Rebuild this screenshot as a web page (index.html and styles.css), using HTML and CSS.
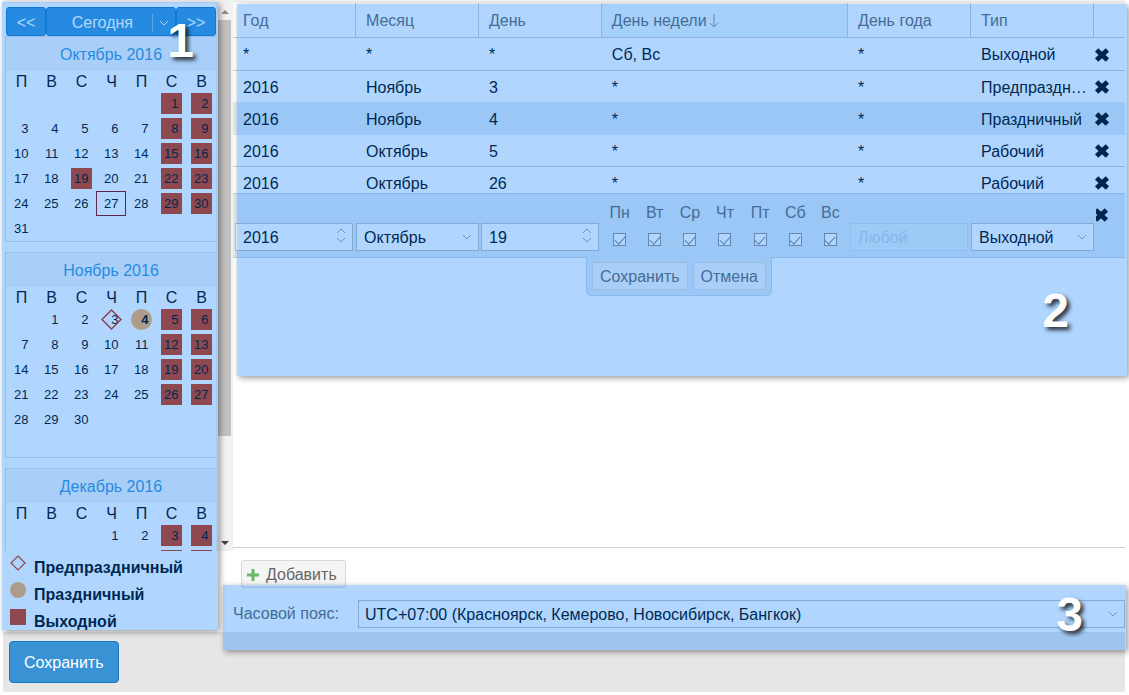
FILE: index.html
```
<!DOCTYPE html>
<html lang="ru">
<head>
    <meta charset="UTF-8">
    <meta name="viewport" content="width=device-width, initial-scale=1.0">
    <title>Производственный календарь</title>
    <link rel="stylesheet" href="styles.css">
</head>
<body>
    <!-- Shared icons -->
    <svg class="sprite" aria-hidden="true">
        <symbol id="icon-remove" viewBox="0 0 16 16"><path d="M2.6 3L13.4 13M13.4 3L2.6 13" stroke="#000" stroke-width="4.8" fill="none"/></symbol>
        <symbol id="icon-down" viewBox="0 0 10 16"><path d="M1 6L5 10L9 6" stroke="#a0a0a0" fill="none"/></symbol>
        <symbol id="icon-spin" viewBox="0 0 10 16"><path d="M1 6L5 2L9 6M1 11L5 15L9 11" stroke="#a0a0a0" fill="none"/></symbol>
        <symbol id="icon-sort" viewBox="0 0 10 16"><path d="M5 1V14M1 10L5 14L9 10" stroke="#909090" fill="none"/></symbol>
    </svg>

    <div class="app">
        <div class="main">
            <!-- Calendars -->
            <aside class="sidebar">
                <div class="calendar-scroll">
                    <div class="calendar-list">
                        <div class="calendar-nav">
                            <button class="nav-button">&lt;&lt;</button>
                            <button class="nav-button today">Сегодня
                                <span class="today-arrow"><svg width="10" height="16" viewBox="0 0 10 16"><path d="M1 6L5 10L9 6" stroke="#fff" fill="none"/></svg></span>
                            </button>
                            <button class="nav-button">&gt;&gt;</button>
                        </div>
                        <div id="calendars"></div>
                    </div>
                    <div class="scrollbar">
                        <span class="scroll-up"></span>
                        <span class="scroll-thumb"></span>
                        <span class="scroll-down"></span>
                    </div>
                </div>
                <ul class="legend">
                    <li><svg width="16" height="16"><path d="M8 1L15 8L8 15L1 8Z" fill="none" stroke="#cd3400" stroke-width="1.2"/></svg>Предпраздничный</li>
                    <li><svg width="16" height="16"><circle cx="8" cy="8" r="8" fill="#fcac56"/></svg>Праздничный</li>
                    <li><svg width="16" height="16"><path d="M0 0H16V16H0Z" fill="#cd3400"/></svg>Выходной</li>
                </ul>
                <div class="highlight highlight-calendar"><span>1</span></div>
            </aside>

            <!-- Rules -->
            <section class="content">
                <div class="rules">
                    <table class="rules-table">
                        <colgroup>
                            <col><col><col><col class="col-week"><col><col><col class="col-action">
                        </colgroup>
                        <thead>
                            <tr>
                                <th>Год</th>
                                <th>Месяц</th>
                                <th>День</th>
                                <th class="sorted">День недели<svg width="10" height="16"><use href="#icon-sort"/></svg></th>
                                <th>День года</th>
                                <th>Тип</th>
                                <th></th>
                            </tr>
                        </thead>
                        <tbody>
                            <tr>
                                <td>*</td><td>*</td><td>*</td><td>Сб, Вс</td><td>*</td><td>Выходной</td>
                                <td class="action"><button class="remove" aria-label="Удалить"><svg width="16" height="16"><use href="#icon-remove"/></svg></button></td>
                            </tr>
                            <tr>
                                <td>2016</td><td>Ноябрь</td><td>3</td><td>*</td><td>*</td><td>Предпраздничный</td>
                                <td class="action"><button class="remove" aria-label="Удалить"><svg width="16" height="16"><use href="#icon-remove"/></svg></button></td>
                            </tr>
                            <tr class="selected">
                                <td>2016</td><td>Ноябрь</td><td>4</td><td>*</td><td>*</td><td>Праздничный</td>
                                <td class="action"><button class="remove" aria-label="Удалить"><svg width="16" height="16"><use href="#icon-remove"/></svg></button></td>
                            </tr>
                            <tr>
                                <td>2016</td><td>Октябрь</td><td>5</td><td>*</td><td>*</td><td>Рабочий</td>
                                <td class="action"><button class="remove" aria-label="Удалить"><svg width="16" height="16"><use href="#icon-remove"/></svg></button></td>
                            </tr>
                            <tr>
                                <td>2016</td><td>Октябрь</td><td>26</td><td>*</td><td>*</td><td>Рабочий</td>
                                <td class="action"><button class="remove" aria-label="Удалить"><svg width="16" height="16"><use href="#icon-remove"/></svg></button></td>
                            </tr>
                        </tbody>
                    </table>

                    <!-- Row editor -->
                    <form class="editor" onsubmit="return false">
                        <div class="editor-fields">
                            <div class="field spin">
                                <input type="text" value="2016" aria-label="Год">
                                <svg width="10" height="16"><use href="#icon-spin"/></svg>
                            </div>
                            <div class="field">
                                <select aria-label="Месяц"><option>Октябрь</option><option>Ноябрь</option><option>Декабрь</option></select>
                                <svg width="10" height="16"><use href="#icon-down"/></svg>
                            </div>
                            <div class="field spin">
                                <input type="text" value="19" aria-label="День">
                                <svg width="10" height="16"><use href="#icon-spin"/></svg>
                            </div>
                            <div class="weekdays">
                                <label>Пн<input type="checkbox" checked></label>
                                <label>Вт<input type="checkbox" checked></label>
                                <label>Ср<input type="checkbox" checked></label>
                                <label>Чт<input type="checkbox" checked></label>
                                <label>Пт<input type="checkbox" checked></label>
                                <label>Сб<input type="checkbox" checked></label>
                                <label>Вс<input type="checkbox" checked></label>
                            </div>
                            <div class="field spin disabled">
                                <input type="text" placeholder="Любой" aria-label="День года" disabled>
                            </div>
                            <div class="field">
                                <select aria-label="Тип"><option>Выходной</option><option>Праздничный</option><option>Предпраздничный</option><option>Рабочий</option></select>
                                <svg width="10" height="16"><use href="#icon-down"/></svg>
                            </div>
                            <button type="button" class="remove" aria-label="Удалить"><svg width="16" height="16"><use href="#icon-remove"/></svg></button>
                        </div>
                        <div class="editor-buttons">
                            <button class="button">Сохранить</button>
                            <button type="button" class="button">Отмена</button>
                        </div>
                    </form>
                    <div class="highlight highlight-rules"><span>2</span></div>
                </div>

                <div class="toolbar">
                    <button class="button add"><svg width="12" height="14"><path d="M6 1V13M0 7H12" stroke="#6cb86c" stroke-width="3"/></svg>Добавить</button>
                </div>

                <div class="timezone">
                    <label for="timezone">Часовой пояс:</label>
                    <div class="field">
                        <select id="timezone"><option>UTC+07:00 (Красноярск, Кемерово, Новосибирск, Бангкок)</option></select>
                        <svg width="10" height="16"><use href="#icon-down"/></svg>
                    </div>
                    <div class="highlight highlight-timezone"><span>3</span></div>
                </div>
            </section>
        </div>

        <footer class="footer">
            <button class="save">Сохранить</button>
        </footer>
    </div>

    <script>
        // offset - empty cells before the 1st, marks - day: css class
        const months = [
            { title: 'Октябрь 2016', offset: 5, days: 31, marks: { 19: 'dayoff', 27: 'current' } },
            { title: 'Ноябрь 2016', offset: 1, days: 30, marks: { 3: 'preholiday', 4: 'holiday' } },
            { title: 'Декабрь 2016', offset: 3, days: 31, marks: {} }
        ];
        const weekdays = ['П', 'В', 'С', 'Ч', 'П', 'С', 'В'];

        function renderMonth(month) {
            let rows = '';
            for (let week = 0; week < 6; week++) {
                rows += '<tr>';
                for (let i = 0; i < 7; i++) {
                    const day = week * 7 + i - month.offset + 1;
                    if (day < 1 || day > month.days) {
                        rows += '<td></td>';
                        continue;
                    }
                    const mark = month.marks[day] || (i > 4 ? 'dayoff' : '');
                    const diamond = mark === 'preholiday'
                        ? '<svg width="21" height="21"><path d="M10.500 1L20 10.500L10.500 20L1 10.500Z" fill="none" stroke="#cd2000" stroke-width="1.4"/></svg>'
                        : '';
                    rows += `<td class="${mark}"><span>${diamond}${day}</span></td>`;
                }
                rows += '</tr>';
            }
            return `<table class="calendar">
                <caption>${month.title}</caption>
                <thead><tr>${weekdays.map(d => `<th>${d}</th>`).join('')}</tr></thead>
                <tbody>${rows}</tbody>
            </table>`;
        }

        document.getElementById('calendars').innerHTML = months.map(renderMonth).join('');
    </script>
</body>
</html>
```
FILE: styles.css
```
* {
    box-sizing: border-box;
}

body {
    margin: 0;
    font-family: "Liberation Sans", Arial, sans-serif;
    font-size: 16px;
    color: #000;
    background-color: #fff;
}

button, input, select {
    font: inherit;
    margin: 0;
}

button {
    cursor: pointer;
}

.sprite {
    display: none;
}

.app {
    display: flex;
    flex-direction: column;
    height: 100vh;
    padding: 0 4px 3px 3px;
}

.main {
    display: flex;
    flex: 1;
    min-height: 0;
    border-top: 3px solid #f1f1f1;
}

/* Calendars */
.sidebar {
    position: relative;
    display: flex;
    flex-direction: column;
    width: 230px;
    flex-shrink: 0;
}

.calendar-scroll {
    display: flex;
    flex: 1;
    min-height: 0;
}

.calendar-list {
    flex: 1;
    padding: 4px 0 0 2px;
    overflow: hidden;
}

.calendar-nav {
    display: flex;
    padding-left: 1px;
}

.nav-button {
    width: 40px;
    height: 29px;
    padding: 2px 0 0;
    border: 1px solid #1a78c2;
    border-radius: 3px;
    background-color: #3892d4;
    color: #fff;
}

.nav-button.today {
    display: flex;
    flex: 1;
    align-items: center;
    justify-content: flex-end;
    gap: 19px;
}

.today-arrow {
    display: flex;
    padding: 1px 6px;
    border-left: 1px solid #7fb8e4;
}

.calendar {
    width: 100%;
    margin-bottom: 10px;
    border-spacing: 0;
    table-layout: fixed;
    border: 1px solid #dcdcdc;
    border-width: 0 0 1px 1px;
}

.calendar caption {
    height: 35px;
    padding-top: 1px;
    line-height: 34px;
    border: 1px solid #dcdcdc;
    border-width: 1px 0 0 1px;
    background-color: #f5f5f5;
    color: #3892d4;
}

.calendar th {
    height: 20px;
    padding: 2px 0 0 1px;
    font-weight: normal;
    line-height: 18px;
}

.calendar td {
    height: 25px;
    padding: 0;
    font-size: 13px;
}

.calendar span {
    position: relative;
    display: block;
    width: 21px;
    height: 21px;
    margin: 0 auto;
    padding-right: 3px;
    line-height: 21px;
    text-align: right;
}

.dayoff span {
    background-color: #cd3400;
}

.calendar .current {
    border: 1px solid #8b0000;
}

.holiday span {
    border-radius: 50%;
    background-color: #fcac56;
    font-weight: bold;
}

.preholiday svg {
    position: absolute;
    top: 0;
    left: 0;
}

.scrollbar {
    display: flex;
    flex-direction: column;
    align-items: center;
    width: 17px;
    background-color: #f1f1f1;
}

.scroll-up, .scroll-down {
    margin: 7px 0 6px;
    border: 4px solid transparent;
    border-top-width: 0;
    border-bottom-color: #8a8a8a;
}

.scroll-down {
    margin: auto 0 6px;
    border-width: 4px 4px 0;
    border-color: #404040 transparent transparent;
}

.scroll-thumb {
    width: 13px;
    height: 76%;
    background-color: #c1c1c1;
}

.legend {
    margin: 0;
    padding: 0 7px;
    list-style: none;
    font-weight: bold;
}

.legend li {
    display: flex;
    gap: 8px;
    height: 27px;
    padding-top: 3px;
    line-height: 27px;
}

.legend svg {
    margin-top: 1px;
}

/* Highlighted zones */
.highlight {
    position: absolute;
    z-index: 5;
    background-color: rgba(0, 123, 255, 0.31);
    box-shadow: 2px 2px 6px rgba(0, 0, 0, 0.4);
    pointer-events: none;
}

.highlight span {
    position: absolute;
    color: #fff;
    font-size: 48px;
    font-weight: bold;
    line-height: 48px;
    text-shadow: 3px 3px 4px rgba(0, 0, 0, 0.8);
}

.highlight-calendar {
    top: -1px;
    bottom: 2px;
    left: -1px;
    width: 216px;
}

.highlight-calendar span {
    top: 15px;
    right: 24px;
}

.highlight-rules {
    top: 1px;
    right: -2px;
    left: 4px;
    height: 372px;
}

.highlight-rules span {
    right: 58px;
    bottom: 41px;
}

.highlight-timezone {
    top: -15px;
    right: -1px;
    bottom: -22px;
    left: -10px;
}

.highlight-timezone span {
    top: 6px;
    right: 43px;
}

/* Rules */
.content {
    display: flex;
    flex: 1;
    flex-direction: column;
    min-width: 0;
    padding-bottom: 4px;
}

.rules {
    position: relative;
    flex: 1;
    min-height: 0;
    border-bottom: 1px solid #cecece;
}

.rules-table {
    width: 100%;
    border-collapse: separate;
    border-spacing: 0;
    table-layout: fixed;
}

.col-week {
    width: 27.6%;
}

.col-action {
    width: 31px;
}

.rules-table th {
    height: 35px;
    padding: 2px 10px 0;
    border: 1px solid #cecece;
    border-width: 0 1px 1px 0;
    color: #666;
    font-weight: normal;
    text-align: left;
}

.rules-table th:last-child {
    border-right: 0;
}

.rules-table .sorted {
    background-color: #eff6fb;
}

.sorted svg {
    margin-left: 2px;
    vertical-align: -3px;
}

.rules-table td {
    height: 32px;
    padding: 2px 6px 0 10px;
    border-bottom: 1px solid #cecece;
    overflow: hidden;
    white-space: nowrap;
    text-overflow: ellipsis;
}

.rules-table tr:first-child td {
    height: 33px;
}

.rules-table tr:nth-child(2) td, .rules-table .selected td {
    border-color: #dfeaf2;
}

.rules-table .selected td {
    background-color: #dfeaf2;
}

.rules-table .action {
    padding: 1px 0 0;
}

.remove {
    display: flex;
    padding: 0;
    border: 0;
    background: none;
}

/* Row editor */
.editor {
    position: relative;
    margin-top: -6px;
}

.editor-fields {
    display: grid;
    grid-template-columns: 1fr 1fr 1fr 2fr 1fr 1fr 31px;
    align-items: end;
    height: 65px;
    padding-bottom: 6px;
    border: 1px solid #c5d5de;
    border-width: 1px 0;
    background-color: #dfeaf2;
}

.editor .remove {
    align-self: start;
    margin: 13px 0 0 2px;
    overflow: hidden;
}

.editor .remove svg {
    margin-left: -3px;
}

.field {
    position: relative;
    min-width: 0;
}

.field input, .field select {
    display: block;
    width: 100%;
    height: 28px;
    padding: 0 7px;
    border: 1px solid #c0c0c0;
    border-radius: 0;
    background-color: #fff;
    color: #000;
    appearance: none;
}

.field input {
    padding-top: 2px;
}

.field svg {
    position: absolute;
    top: 6px;
    right: 7px;
    pointer-events: none;
}

.spin {
    margin: 0 3px 0 2px;
}

.field.spin svg {
    top: 4px;
}

.disabled {
    opacity: 0.3;
}

.disabled input {
    border-color: #b0c4d4;
    background-color: #f5f9fc;
}

.disabled input::placeholder {
    color: #8a9aa8;
}

.weekdays {
    display: grid;
    grid-template-columns: repeat(7, 1fr);
    padding-bottom: 5px;
}

.weekdays label {
    display: flex;
    flex-direction: column;
    align-items: center;
    gap: 11px;
    color: #666;
    line-height: 18px;
}

.weekdays input {
    display: flex;
    justify-content: center;
    width: 13px;
    height: 13px;
    border: 1px solid #909090;
    background-color: #fff;
    appearance: none;
}

.weekdays input:checked::before {
    content: "";
    width: 5px;
    height: 9px;
    border: solid #808080;
    border-width: 0 1px 1px 0;
    transform: rotate(42deg);
}

.editor-buttons {
    display: flex;
    gap: 5px;
    width: fit-content;
    margin: -1px auto 0;
    padding: 5px;
    border: 1px solid #c5d5de;
    border-top: 0;
    border-radius: 0 0 5px 5px;
    background-color: #dfeaf2;
}

.button {
    height: 28px;
    padding: 1px 7px 0;
    border: 1px solid #d8d8d8;
    border-radius: 3px;
    background-color: #f5f5f5;
    color: #666;
}

.toolbar {
    padding: 12px 8px;
}

.add {
    display: flex;
    gap: 7px;
    align-items: center;
    padding: 1px 8px 0 5px;
}

.timezone {
    position: relative;
    display: flex;
    align-items: center;
}

.timezone label {
    width: 125px;
    color: #666;
}

.timezone .field {
    flex: 1;
}

.timezone select {
    padding-left: 6px;
}

/* Footer */
.footer {
    padding: 9px 6px;
    background-color: #e6e6e6;
}

.save {
    display: block;
    height: 42px;
    padding: 1px 14px 0;
    border: 1px solid #1a78c2;
    border-radius: 4px;
    background-color: #3892d4;
    color: #fff;
}
```
